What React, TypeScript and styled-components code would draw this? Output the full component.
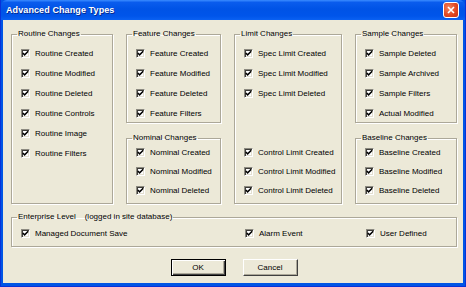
import React from 'react'
import styled, { createGlobalStyle } from 'styled-components'

const GlobalStyle = createGlobalStyle`
  html, body {
    margin: 0;
    padding: 0;
    background: #ece9d8;
  }
  body {
    font-family: 'Liberation Sans', Arial, sans-serif;
  }
`

// window frame
const Window = styled.div`
  width: 466px;
  height: 287px;
  box-sizing: border-box;
  display: flex;
  flex-direction: column;
  background: #0055e5;
  border-left: 1px solid #0831d9;
  border-right: 1px solid #0831d9;
  border-bottom: 1px solid #0831d9;
  font-family: 'Liberation Sans', Arial, sans-serif;
  font-size: 8px;
  color: #000;
`

const TitleBar = styled.div`
  height: 20px;
  flex: none;
  display: flex;
  align-items: center;
  justify-content: space-between;
  padding: 0 6px 0 5px;
  background: linear-gradient(
    #3b8cff 0%,
    #0a5ced 12%,
    #0053e6 45%,
    #0055ea 80%,
    #0a61f2 100%
  );
  border-radius: 6px 6px 0 0;
`

const Title = styled.span`
  font-weight: bold;
  font-size: 9px;
  color: #fff;
  text-shadow: 1px 1px 0 #0a2a8c;
  letter-spacing: 0.1px;
`

const CloseButton = styled.div`
  width: 16px;
  height: 16px;
  box-sizing: border-box;
  border: 1px solid #fff;
  border-radius: 3px;
  background: radial-gradient(circle at 35% 35%, #f2835f, #e0451f 60%, #c3341a);
  display: flex;
  align-items: center;
  justify-content: center;
`

const Body = styled.div`
  flex: 1;
  margin: 0 2px 3px 2px;
  background: #ece9d8;
  padding: 9px 6px 0 8px;
  display: flex;
  flex-direction: column;
`

const Groups = styled.div`
  display: grid;
  grid-template-columns: 102px 95px 108px 102px;
  grid-template-rows: 94px 71px;
  column-gap: 13px;
  row-gap: 10px;
`

const Group = styled.fieldset<{ $col: number; $row: string }>`
  grid-column: ${(p) => p.$col};
  grid-row: ${(p) => p.$row};
  margin: 0;
  padding: 0 0 3px 9px;
  min-width: 0;
  border: 1px solid #aca899;
  box-shadow: inset 1px 1px 0 #fff, 1px 1px 0 #fff;
  display: flex;
  flex-direction: column;
`

// fieldset puts the legend after its left padding, so pull it back
const Legend = styled.legend`
  margin-left: -4px;
  padding: 0 1px;
  line-height: 10px;
  font-size: 8px;
  white-space: pre;
`

const List = styled.div<{ $top?: number; $bottom?: boolean }>`
  display: flex;
  flex-direction: column;
  padding-top: ${(p) => p.$top || 0}px;
  margin-top: ${(p) => (p.$bottom ? 'auto' : '0')};
`

const Item = styled.label<{ $h: number }>`
  height: ${(p) => p.$h}px;
  display: flex;
  align-items: center;
  gap: 5px;
  white-space: nowrap;
`

const Box = styled.span`
  width: 9px;
  height: 9px;
  flex: none;
  box-sizing: border-box;
  background: #fff;
  border: 1px solid;
  border-color: #8c8a80 #fff #fff #8c8a80;
  box-shadow: inset 1px 1px 0 #3f3e3a, inset -1px -1px 0 #e2dfd0;
  display: flex;
  align-items: center;
  justify-content: center;
`

const Enterprise = styled.fieldset`
  margin: 8px 0 0 0;
  height: 35px;
  box-sizing: border-box;
  padding: 2px 0 0 9px;
  min-width: 0;
  border: 1px solid #aca899;
  box-shadow: inset 1px 1px 0 #fff, 1px 1px 0 #fff;
`

const EnterpriseRow = styled.div`
  display: grid;
  grid-template-columns: 224px 121px 1fr;
`

const ButtonRow = styled.div`
  margin-top: 12px;
  display: flex;
  justify-content: center;
  gap: 17px;
`

const Button = styled.button<{ $default?: boolean }>`
  width: 55px;
  height: 17px;
  padding: 0;
  font-family: 'Liberation Sans', Arial, sans-serif;
  font-size: 8px;
  color: #000;
  background: #ece9d8;
  border: 1px solid;
  border-color: ${(p) => (p.$default ? '#000' : '#fff #404040 #404040 #fff')};
  box-shadow: ${(p) =>
    p.$default
      ? 'inset 1px 1px 0 #fff, inset -1px -1px 0 #404040, inset -2px -2px 0 #aca899'
      : 'inset -1px -1px 0 #aca899'};
`

function Check() {
  return (
    <svg width="7" height="7" viewBox="0 0 7 7">
      <path d="M0.8 3 L2.6 4.9 L6.2 1.3" stroke="#000" strokeWidth="1.5" fill="none" />
    </svg>
  )
}

function CheckItem({ label, h }: { label: string; h: number }) {
  return (
    <Item $h={h}>
      <Box>
        <Check />
      </Box>
      {label}
    </Item>
  )
}

export default function App() {
  return (
    <>
      <GlobalStyle />
      <Window>
        <TitleBar>
          <Title>Advanced Change Types</Title>
          <CloseButton>
            <svg width="8" height="8" viewBox="0 0 8 8">
              <path d="M1 1 L7 7 M7 1 L1 7" stroke="#fff" strokeWidth="1.6" />
            </svg>
          </CloseButton>
        </TitleBar>

        <Body>
          <Groups>
            <Group $col={1} $row="1 / span 2">
              <Legend>Routine Changes</Legend>
              <List $top={4}>
                <CheckItem label="Routine Created" h={20} />
                <CheckItem label="Routine Modified" h={20} />
                <CheckItem label="Routine Deleted" h={20} />
                <CheckItem label="Routine Controls" h={20} />
                <CheckItem label="Routine Image" h={20} />
                <CheckItem label="Routine Filters" h={20} />
              </List>
            </Group>

            <Group $col={2} $row="1">
              <Legend>Feature Changes</Legend>
              <List $top={4}>
                <CheckItem label="Feature Created" h={20} />
                <CheckItem label="Feature Modified" h={20} />
                <CheckItem label="Feature Deleted" h={20} />
                <CheckItem label="Feature Filters" h={20} />
              </List>
            </Group>

            <Group $col={2} $row="2">
              <Legend>Nominal Changes</Legend>
              <List $bottom>
                <CheckItem label="Nominal Created" h={19} />
                <CheckItem label="Nominal Modified" h={19} />
                <CheckItem label="Nominal Deleted" h={19} />
              </List>
            </Group>

            <Group $col={3} $row="1 / span 2">
              <Legend>Limit Changes</Legend>
              <List $top={4}>
                <CheckItem label="Spec Limit Created" h={20} />
                <CheckItem label="Spec Limit Modified" h={20} />
                <CheckItem label="Spec Limit Deleted" h={20} />
              </List>
              <List $bottom>
                <CheckItem label="Control Limit Created" h={19} />
                <CheckItem label="Control Limit Modified" h={19} />
                <CheckItem label="Control Limit Deleted" h={19} />
              </List>
            </Group>

            <Group $col={4} $row="1">
              <Legend>Sample Changes</Legend>
              <List $top={4}>
                <CheckItem label="Sample Deleted" h={20} />
                <CheckItem label="Sample Archived" h={20} />
                <CheckItem label="Sample Filters" h={20} />
                <CheckItem label="Actual Modified" h={20} />
              </List>
            </Group>

            <Group $col={4} $row="2">
              <Legend>Baseline Changes</Legend>
              <List $bottom>
                <CheckItem label="Baseline Created" h={19} />
                <CheckItem label="Baseline Modified" h={19} />
                <CheckItem label="Baseline Deleted" h={19} />
              </List>
            </Group>
          </Groups>

          <Enterprise>
            <Legend>{'Enterprise Level    (logged in site database)'}</Legend>
            <EnterpriseRow>
              <CheckItem label="Managed Document Save" h={18} />
              <CheckItem label="Alarm Event" h={18} />
              <CheckItem label="User Defined" h={18} />
            </EnterpriseRow>
          </Enterprise>

          <ButtonRow>
            <Button $default>OK</Button>
            <Button>Cancel</Button>
          </ButtonRow>
        </Body>
      </Window>
    </>
  )
}
